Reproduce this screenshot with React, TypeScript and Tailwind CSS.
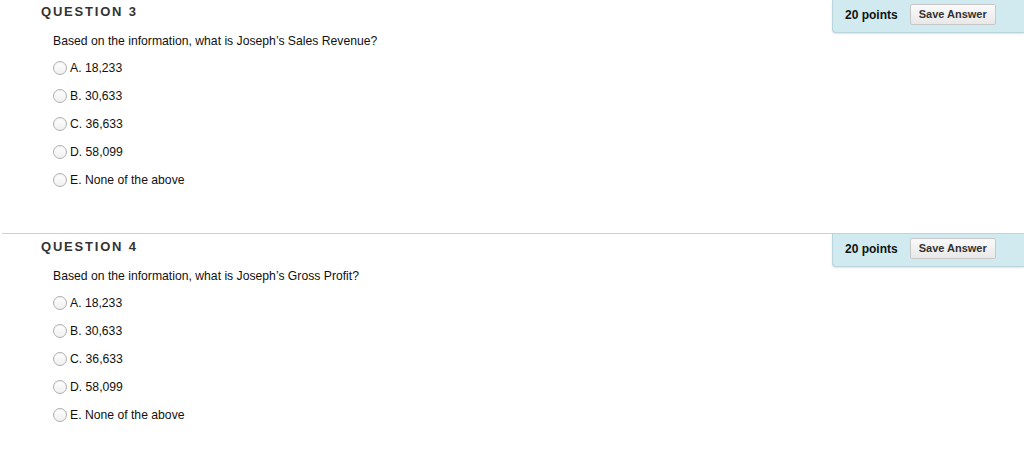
const OPTIONS = ["A. 18,233", "B. 30,633", "C. 36,633", "D. 58,099", "E. None of the above"];

type Question = { number: number; text: string };

const QUESTIONS: Question[] = [
  { number: 3, text: "Based on the information, what is Joseph’s Sales Revenue?" },
  { number: 4, text: "Based on the information, what is Joseph’s Gross Profit?" },
];

function Radio() {
  return (
    <span className="w-[14px] h-[14px] rounded-full border border-[#b0b0b0] bg-gradient-to-b from-white to-[#f0f0f0] shadow-[inset_0_1px_1px_rgba(0,0,0,0.06)] shrink-0" />
  );
}

function QuestionBlock({ q, first }: { q: Question; first: boolean }) {
  return (
    <div className="flex">
      <div className={`flex-1 flex flex-col pl-[41px] ${first ? "pt-[4px]" : "pt-[5px]"}`}>
        <h3 className="h-[16px] leading-[16px] text-[13px] font-bold tracking-[1.8px] text-[#333]">
          QUESTION {q.number}
        </h3>
        <p className="mt-[13px] pl-[12px] h-[16px] leading-[16px] text-[12.2px] text-[#111]">{q.text}</p>
        <ul className="mt-[5px] pl-[12px]">
          {OPTIONS.map((o) => (
            <li key={o} className="h-[28px] flex items-center gap-[3px] text-[12.2px] text-[#111]">
              <Radio />
              <span>{o}</span>
            </li>
          ))}
        </ul>
      </div>
      <div className="w-[192px] h-[33px] self-start flex items-center pb-[3px] pl-[12px] bg-[#d1eaef] border-l border-b border-[#b9d4da] rounded-bl-[4px] shadow-[0_1px_2px_rgba(0,0,0,0.12)]">
        <span className="text-[12px] font-bold text-[#111]">20 points</span>
        <button className="ml-[12px] h-[21px] px-[8px] text-[11px] font-bold text-[#333] border border-[#c8c8c8] rounded-[2px] bg-gradient-to-b from-[#fafafa] to-[#e8e8e8]">
          Save Answer
        </button>
      </div>
    </div>
  );
}

export default function App() {
  return (
    <div className="w-[1024px] h-[456px] bg-white overflow-hidden font-['Liberation_Sans',Arial,sans-serif]">
      <QuestionBlock q={QUESTIONS[0]} first />
      <div className="mt-[39px] ml-[2px] border-t border-[#cfcfcf]" />
      <QuestionBlock q={QUESTIONS[1]} first={false} />
    </div>
  );
}
